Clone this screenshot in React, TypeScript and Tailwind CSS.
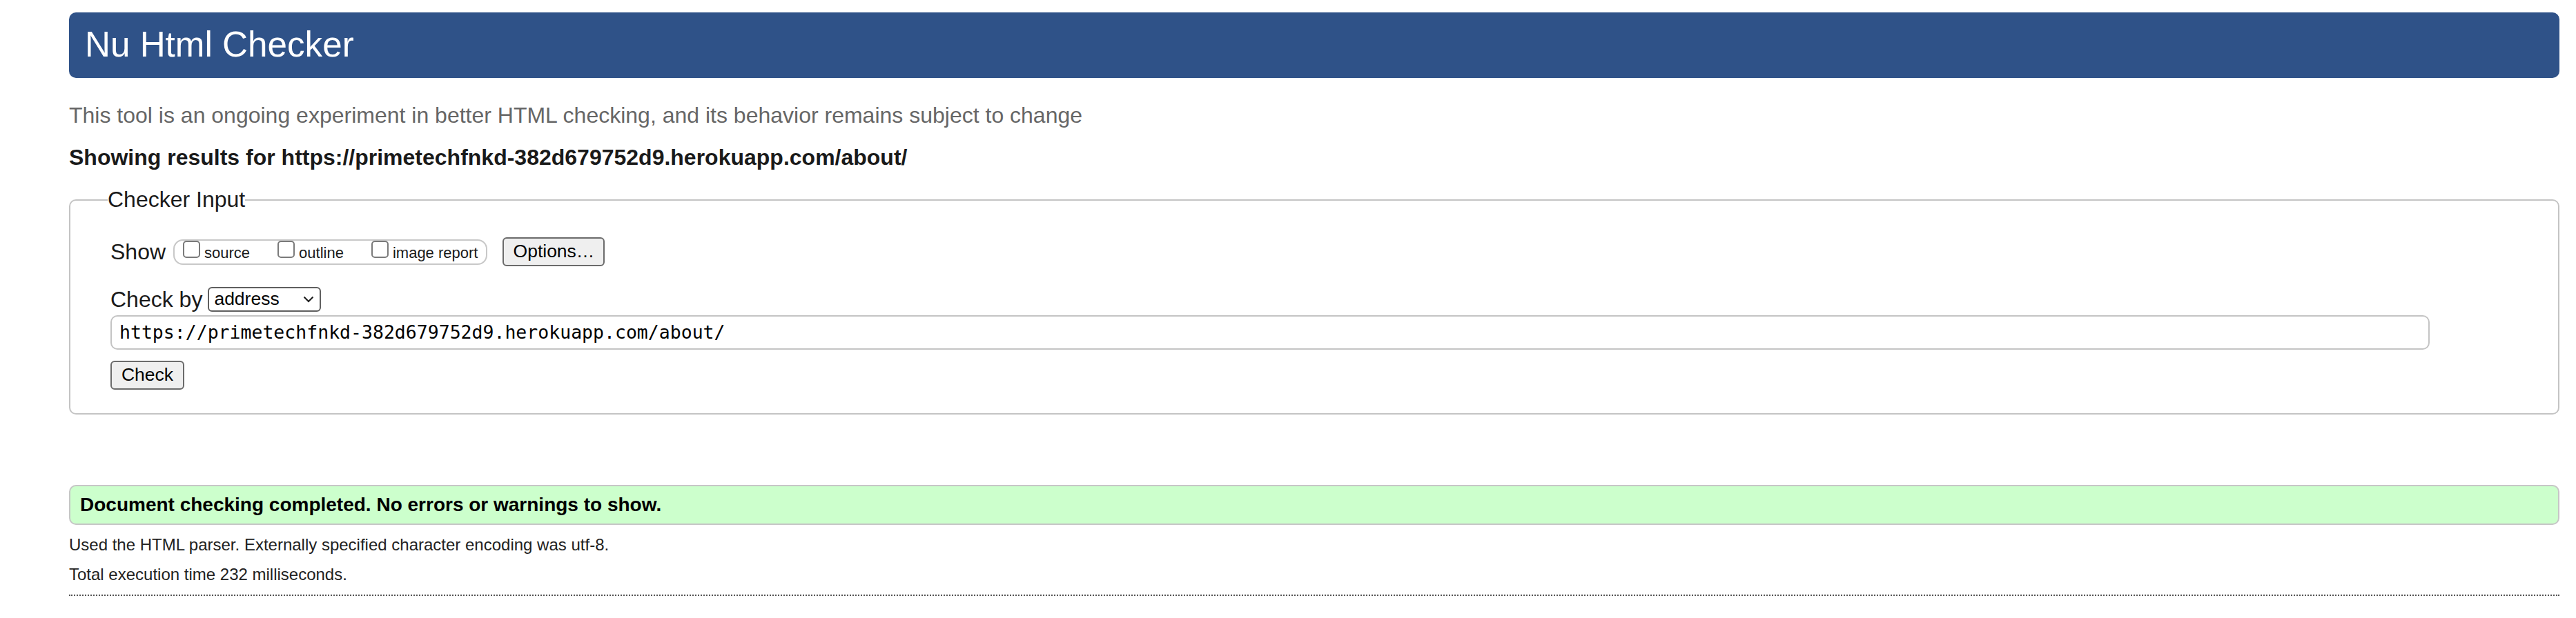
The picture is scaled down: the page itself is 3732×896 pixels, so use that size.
import React from "react";

const Checkbox: React.FC = () => (
  <span className="inline-block h-[25px] w-[25px] rounded-[5px] border-2 border-[#7a7a7a] bg-white align-baseline" />
);

const ShowOption: React.FC<{ label: string }> = ({ label }) => (
  <label className="whitespace-nowrap">
    <Checkbox />
    <span className="ml-[6px]">{label}</span>
  </label>
);

const App: React.FC = () => {
  const url = "https://primetechfnkd-382d679752d9.herokuapp.com/about/";

  return (
    <div
      className="min-h-[896px] bg-white pl-[100px] pr-[24px] pt-[18px] text-[#1a1a1a]"
      style={{ fontFamily: '"Liberation Sans", Arial, sans-serif' }}
    >
      {/* Title bar */}
      <h1 className="flex h-[95px] items-center rounded-[10px] bg-[#2f5288] pl-[23px] text-[51.2px] font-normal text-white">
        Nu Html Checker
      </h1>

      <p className="mt-[36px] text-[32px] leading-[37px] text-[#666666]">
        This tool is an ongoing experiment in better HTML checking, and its behavior remains subject to change
      </p>

      <p className="mt-[24px] text-[32px] font-bold leading-[37px]">
        Showing results for {url}
      </p>

      <fieldset className="mt-[24px] rounded-[10px] border-2 border-[#c4c4c4] px-[58px] pb-[34px] pt-[36px]">
        <legend className="ml-[-4px] p-0 text-[32px] leading-[37px]">Checker Input</legend>

        {/* Show row */}
        <div className="flex h-[42px] items-center">
          <span className="text-[32px] leading-[37px]">Show</span>
          <div className="ml-[11px] flex h-[37px] gap-[40px] rounded-[14px] border-2 border-[#c8c8c8] px-[12px] text-[22px] leading-[30px]">
            <ShowOption label="source" />
            <ShowOption label="outline" />
            <ShowOption label="image report" />
          </div>
          <button className="ml-[22px] flex h-[42px] w-[148px] items-center justify-center rounded-[6px] border-2 border-[#6b6b6b] bg-[#efefef] text-[26.5px] text-black">
            Options…
          </button>
        </div>

        {/* Check by row */}
        <div className="mt-[30px] flex h-[36px] items-center">
          <span className="text-[32px] leading-[37px]">Check by</span>
          <div className="ml-[8px] flex h-[36px] w-[164px] items-center justify-between rounded-[6px] border-2 border-[#5f5f5f] pl-[7px] pr-[8px] text-[26.5px] text-black">
            <span>address</span>
            <svg width="16" height="10" viewBox="0 0 16 10" fill="none">
              <path d="M1.5 1.5 L8 8 L14.5 1.5" stroke="#1a1a1a" strokeWidth="2" />
            </svg>
          </div>
        </div>

        {/* Address input */}
        <div className="mt-[5px] mr-[128px] flex h-[50px] items-center rounded-[10px] border-2 border-[#c4c4c4] pl-[11px]">
          <span
            className="text-[26.5px] text-black"
            style={{ fontFamily: '"DejaVu Sans Mono", "Liberation Mono", monospace' }}
          >
            {url}
          </span>
        </div>

        <button className="mt-[16px] flex h-[42px] w-[107px] items-center justify-center rounded-[6px] border-2 border-[#6b6b6b] bg-[#efefef] text-[26.5px] text-black">
          Check
        </button>
      </fieldset>

      {/* Result */}
      <div className="mt-[102px] flex h-[58px] items-center rounded-[10px] border-2 border-[#c6c6c6] bg-[#ccffcc] pl-[14px] text-[28px] font-bold text-black">
        Document checking completed. No errors or warnings to show.
      </div>

      <p className="mt-[15px] text-[24px] leading-[27px] text-[#222222]">
        Used the HTML parser. Externally specified character encoding was utf-8.
      </p>
      <p className="mt-[16px] text-[24px] leading-[27px] text-[#222222]">
        Total execution time 232 milliseconds.
      </p>

      <hr className="mt-[16px] border-0 border-t-2 border-dotted border-[#555555]" />
    </div>
  );
};

export default App;
